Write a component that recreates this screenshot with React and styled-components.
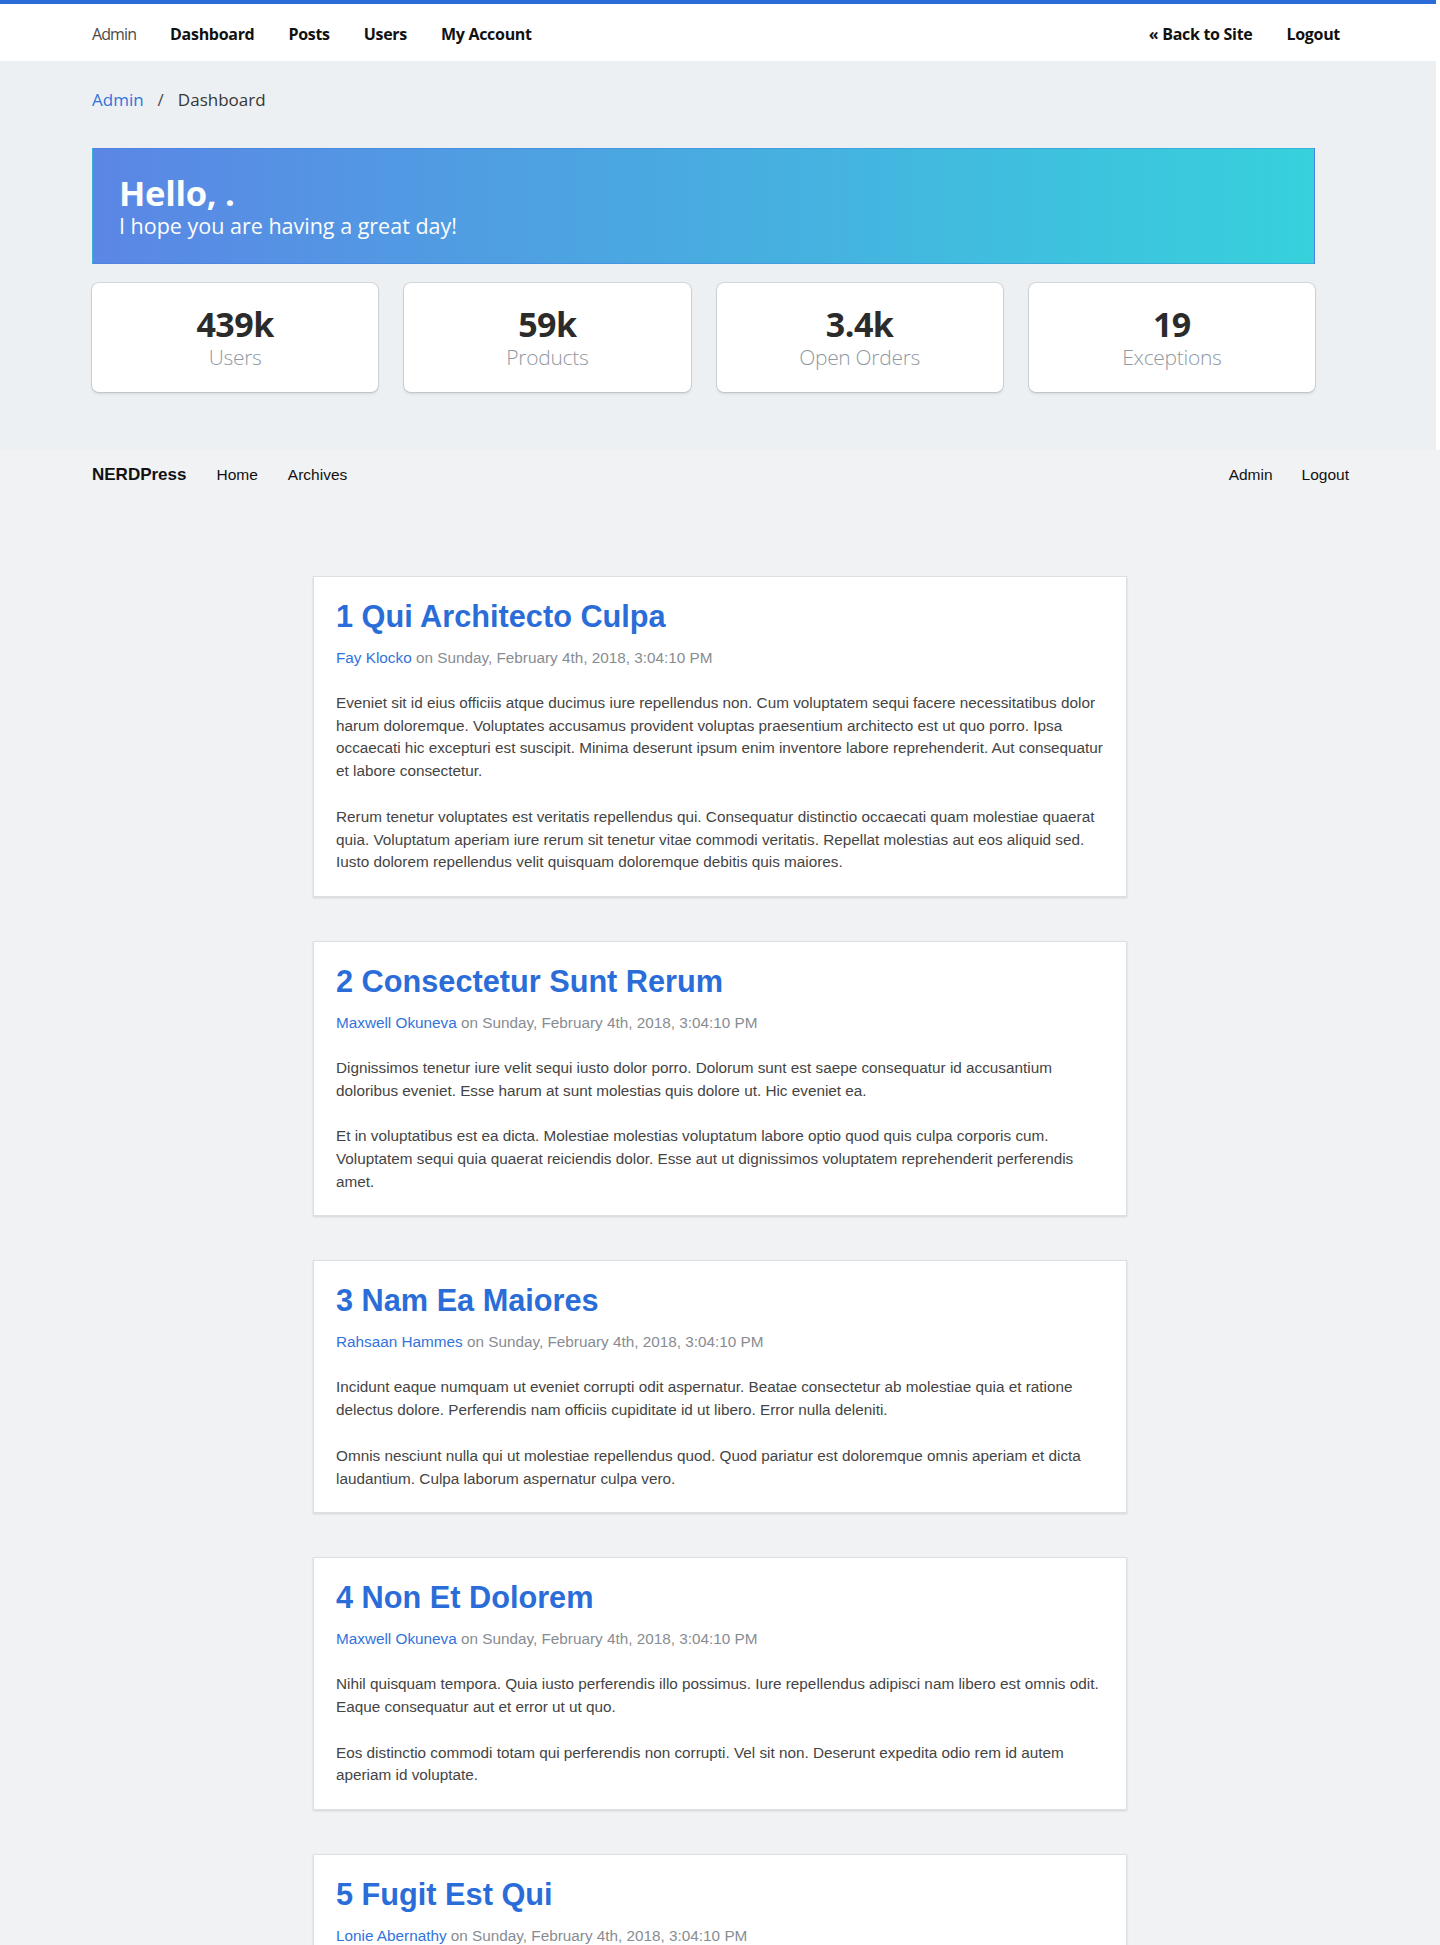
import React from "react";
import styled, { createGlobalStyle } from "styled-components";

const GlobalStyle = createGlobalStyle`
  html, body {
    margin: 0;
    padding: 0;
  }
  body {
    background: #f1f2f4;
    font-family: "Liberation Sans", Arial, sans-serif;
  }
  * {
    box-sizing: border-box;
  }
`;

const stats = [
  { value: "439k", label: "Users" },
  { value: "59k", label: "Products" },
  { value: "3.4k", label: "Open Orders" },
  { value: "19", label: "Exceptions" },
];

const posts = [
  {
    title: "1 Qui Architecto Culpa",
    author: "Fay Klocko",
    body: [
      "Eveniet sit id eius officiis atque ducimus iure repellendus non. Cum voluptatem sequi facere necessitatibus dolor harum doloremque. Voluptates accusamus provident voluptas praesentium architecto est ut quo porro. Ipsa occaecati hic excepturi est suscipit. Minima deserunt ipsum enim inventore labore reprehenderit. Aut consequatur et labore consectetur.",
      "Rerum tenetur voluptates est veritatis repellendus qui. Consequatur distinctio occaecati quam molestiae quaerat quia. Voluptatum aperiam iure rerum sit tenetur vitae commodi veritatis. Repellat molestias aut eos aliquid sed. Iusto dolorem repellendus velit quisquam doloremque debitis quis maiores.",
    ],
  },
  {
    title: "2 Consectetur Sunt Rerum",
    author: "Maxwell Okuneva",
    body: [
      "Dignissimos tenetur iure velit sequi iusto dolor porro. Dolorum sunt est saepe consequatur id accusantium doloribus eveniet. Esse harum at sunt molestias quis dolore ut. Hic eveniet ea.",
      "Et in voluptatibus est ea dicta. Molestiae molestias voluptatum labore optio quod quis culpa corporis cum. Voluptatem sequi quia quaerat reiciendis dolor. Esse aut ut dignissimos voluptatem reprehenderit perferendis amet.",
    ],
  },
  {
    title: "3 Nam Ea Maiores",
    author: "Rahsaan Hammes",
    body: [
      "Incidunt eaque numquam ut eveniet corrupti odit aspernatur. Beatae consectetur ab molestiae quia et ratione delectus dolore. Perferendis nam officiis cupiditate id ut libero. Error nulla deleniti.",
      "Omnis nesciunt nulla qui ut molestiae repellendus quod. Quod pariatur est doloremque omnis aperiam et dicta laudantium. Culpa laborum aspernatur culpa vero.",
    ],
  },
  {
    title: "4 Non Et Dolorem",
    author: "Maxwell Okuneva",
    body: [
      "Nihil quisquam tempora. Quia iusto perferendis illo possimus. Iure repellendus adipisci nam libero est omnis odit. Eaque consequatur aut et error ut ut quo.",
      "Eos distinctio commodi totam qui perferendis non corrupti. Vel sit non. Deserunt expedita odio rem id autem aperiam id voluptate.",
    ],
  },
  {
    title: "5 Fugit Est Qui",
    author: "Lonie Abernathy",
    body: [
      "Quia sint non dolores quis. Et molestiae perspiciatis et quo ut voluptatem. Sed ea officia consequatur voluptas quia. Dolores aut sit rerum est eum ea.",
      "Aut vel ipsam similique ut qui. Minus cumque eveniet sed laborum. Nihil dolorem totam quo et.",
    ],
  },
];

const DATE = "Sunday, February 4th, 2018, 3:04:10 PM";

export default function App() {
  return (
    <>
      <GlobalStyle />
      <AdminArea>
        <TopNav>
          <NavGroup>
            <TopLink $light>Admin</TopLink>
            <TopLink>Dashboard</TopLink>
            <TopLink>Posts</TopLink>
            <TopLink>Users</TopLink>
            <TopLink>My Account</TopLink>
          </NavGroup>
          <NavGroup>
            <TopLink>« Back to Site</TopLink>
            <TopLink>Logout</TopLink>
          </NavGroup>
        </TopNav>
        <AdminContainer>
          <Breadcrumb>
            <CrumbLink>Admin</CrumbLink>
            <CrumbSep>/</CrumbSep>
            <CrumbCurrent>Dashboard</CrumbCurrent>
          </Breadcrumb>
          <Hero>
            <HeroTitle>Hello, .</HeroTitle>
            <HeroSubtitle>I hope you are having a great day!</HeroSubtitle>
          </Hero>
          <Tiles>
            {stats.map((s) => (
              <Tile key={s.label}>
                <TileValue>{s.value}</TileValue>
                <TileLabel>{s.label}</TileLabel>
              </Tile>
            ))}
          </Tiles>
        </AdminContainer>
      </AdminArea>

      <BlogNav>
        <NavGroup $gap={30}>
          <Brand>NERDPress</Brand>
          <BlogLink>Home</BlogLink>
          <BlogLink>Archives</BlogLink>
        </NavGroup>
        <NavGroup $gap={29}>
          <BlogLink>Admin</BlogLink>
          <BlogLink>Logout</BlogLink>
        </NavGroup>
      </BlogNav>

      <PostList>
        {posts.map((p) => (
          <PostCard key={p.title}>
            <PostTitle>{p.title}</PostTitle>
            <PostMeta>
              <Author>{p.author}</Author> on {DATE}
            </PostMeta>
            {p.body.map((para, i) => (
              <PostText key={i}>{para}</PostText>
            ))}
          </PostCard>
        ))}
      </PostList>
    </>
  );
}

const AdminArea = styled.section`
  background: #ecf0f3;
  border-right: 4px solid #ffffff;
  font-family: "Open Sans", "Liberation Sans", sans-serif;
  padding-bottom: 58px;
`;

const TopNav = styled.nav`
  display: flex;
  justify-content: space-between;
  align-items: center;
  height: 61px;
  background: #ffffff;
  border-top: 4px solid #2a6bd8;
  padding: 2px 96px 0 92px;
`;

const NavGroup = styled.div`
  display: flex;
  align-items: center;
  gap: ${(p) => (p.$gap ? p.$gap : 34)}px;
`;

const TopLink = styled.a`
  font-size: 16px;
  font-weight: ${(p) => (p.$light ? 400 : 700)};
  color: ${(p) => (p.$light ? "#4a4a4a" : "#111111")};
  letter-spacing: ${(p) => (p.$light ? "-0.9px" : "-0.3px")};
  cursor: pointer;
`;

const AdminContainer = styled.div`
  padding: 0 121px 0 92px;
`;

const Breadcrumb = styled.div`
  display: flex;
  align-items: center;
  gap: 14px;
  margin-top: 26px;
  font-size: 17px;
  line-height: 26px;
`;

const CrumbLink = styled.a`
  color: #3273dc;
`;

const CrumbSep = styled.span`
  color: #4a4a4a;
`;

const CrumbCurrent = styled.span`
  color: #363636;
`;

const Hero = styled.div`
  margin-top: 35px;
  height: 116px;
  padding: 25px 26px;
  background: linear-gradient(to right, #5b86e5, #36d1dc);
  border: 1px solid rgba(60, 120, 220, 0.35);
  color: #fcfdfd;
`;

const HeroTitle = styled.h1`
  margin: 0;
  font-size: 34.5px;
  font-weight: 700;
  line-height: 38px;
  letter-spacing: -0.3px;
`;

const HeroSubtitle = styled.p`
  margin: 0;
  font-size: 21.5px;
  font-weight: 400;
  line-height: 27px;
  letter-spacing: 0;
`;

const Tiles = styled.div`
  display: grid;
  grid-template-columns: repeat(4, 1fr);
  gap: 26px;
  margin-top: 19px;
`;

const Tile = styled.div`
  display: flex;
  flex-direction: column;
  align-items: center;
  height: 109px;
  padding-top: 22px;
  background: #ffffff;
  border-radius: 7px;
  box-shadow: 0 2px 3px rgba(10, 10, 10, 0.1), 0 0 0 1px rgba(10, 10, 10, 0.1);
`;

const TileValue = styled.div`
  font-size: 34px;
  font-weight: 700;
  line-height: 38px;
  color: #2b2b2b;
  letter-spacing: -0.5px;
`;

const TileLabel = styled.div`
  font-size: 21px;
  font-weight: 300;
  line-height: 28px;
  color: #8f99a3;
  letter-spacing: -0.3px;
`;

const BlogNav = styled.nav`
  display: flex;
  justify-content: space-between;
  align-items: center;
  height: 50px;
  padding: 0 91px 0 92px;
  color: #111111;
`;

const Brand = styled.a`
  font-size: 17px;
  font-weight: 700;
`;

const BlogLink = styled.a`
  font-size: 15.5px;
  cursor: pointer;
`;

const PostList = styled.main`
  display: flex;
  flex-direction: column;
  align-items: center;
  gap: 44px;
  padding: 76px 0 60px;
`;

const PostCard = styled.article`
  width: 814px;
  padding: 22px 22px 22px;
  background: #ffffff;
  border: 1px solid #dcdfe3;
  box-shadow: 0 1px 2px rgba(0, 0, 0, 0.12);
`;

const PostTitle = styled.h2`
  margin: 0 0 12px;
  font-size: 30.7px;
  font-weight: 700;
  line-height: 36px;
  color: #2a6dd8;
`;

const PostMeta = styled.div`
  margin-bottom: 23px;
  font-size: 15.3px;
  line-height: 22px;
  color: #888c92;
`;

const Author = styled.a`
  color: #3273dc;
`;

const PostText = styled.p`
  margin: 0 0 23px;
  font-size: 15.3px;
  line-height: 22.7px;
  color: #444444;

  &:last-child {
    margin-bottom: 0;
  }
`;
